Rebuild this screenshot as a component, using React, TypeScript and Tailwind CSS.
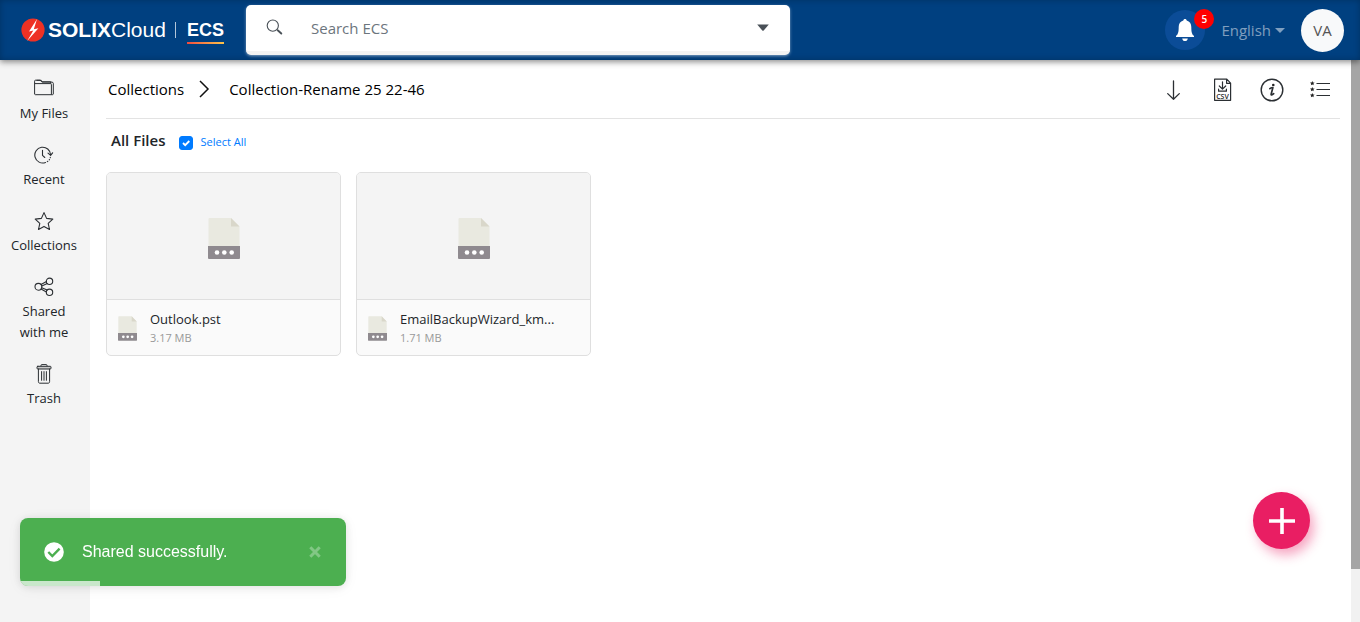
import type { ReactNode } from "react";

type NavItem = { label: string; icon: ReactNode };
type FileItem = { name: string; size: string };

const stroke = {
  fill: "none",
  stroke: "#2b2f33",
  strokeLinecap: "round",
  strokeLinejoin: "round",
} as const;

const FolderIcon = () => (
  <svg viewBox="0 0 20 20" className="size-5" {...stroke} strokeWidth="1" aria-hidden="true">
    <path d="M.6 14.500V2.200c0-.6.3-1 .9-1h4.800l1.600 1.900h10c.8 0 1.400.5 1.400 1.200v10.700c0 .4-.4.7-.8.7H1.400c-.5 0-.8-.3-.8-.700Z" />
    <path d="M3 1.300h4.200l1.500 1.500h8v1.500M1.200 4.600h15.200c.7 0 1 .3 1 1v9.500" />
  </svg>
);

const RecentIcon = () => (
  <svg viewBox="0 0 20 20" className="size-5" {...stroke} strokeWidth="1.100" aria-hidden="true">
    <path d="M16.600 9.800A7.900 7.900 0 1 0 11.500 17.500" />
    <path d="M13.300 16.600l.5-.3M15.200 14.900l.3-.4M16.200 12.800l.1-.4" />
    <path d="M14 8.200l2.600 2.200 2-2.600M8.500 5.200v5.200l2.300 2.100" />
  </svg>
);

const StarIcon = () => (
  <svg viewBox="0 0 20 20" className="size-5" {...stroke} strokeWidth="1.100" aria-hidden="true">
    <path d="M10 1.600l2.600 5.800 6.200.7-4.600 4.200 1.300 6.200L10 15.400l-5.500 3.100 1.300-6.200L1.200 8.100 7.400 7.400Z" />
  </svg>
);

const ShareIcon = () => (
  <svg viewBox="0 0 20 20" className="size-5" {...stroke} strokeWidth="1.100" aria-hidden="true">
    <circle cx="4.400" cy="9.800" r="3.400" />
    <circle cx="15.500" cy="4.300" r="3.200" />
    <circle cx="15.500" cy="15.300" r="3.200" />
    <path d="M7 7.600l5.500-3M7.800 9l5.500-2.500M7.700 10.700l5.500 2.300M7 12.100l5.400 2.900" />
  </svg>
);

const TrashIcon = () => (
  <svg viewBox="0 0 20 20" className="size-5" {...stroke} strokeWidth="1" aria-hidden="true">
    <path d="M7 2.400V1.300c0-.5.3-.7.8-.7h4.400c.5 0 .8.2.8.700v1.100" />
    <rect x="3" y="2.300" width="14" height="2.700" rx=".8" fill="#c8c8c8" />
    <path d="M4.400 5v12.600c0 1 .5 1.600 1.500 1.600h8.200c1 0 1.500-.6 1.500-1.600V5M7.600 7.600v8.700M10 7.600v8.700M12.400 7.600v8.700" />
  </svg>
);

const FileGlyph = ({ className }: { className: string }) => (
  <svg viewBox="0 0 32 41" className={className} aria-hidden="true">
    <path d="M.5 1a1 1 0 0 1 1-1H23l8.500 8.500V29H.5Z" fill="#e9e9e0" />
    <path d="M23 0l8.500 8.500H23Z" fill="#d9d7ca" />
    <path d="M0 28h32v12a1 1 0 0 1-1 1H1a1 1 0 0 1-1-1Z" fill="#8f8a8f" />
    <circle cx="9" cy="34.500" r="2.300" fill="#fff" />
    <circle cx="16.300" cy="34.500" r="2.300" fill="#fff" />
    <circle cx="23.700" cy="34.500" r="2.300" fill="#fff" />
  </svg>
);

const DownloadIcon = () => (
  <svg viewBox="0 0 25 25" className="size-[25px]" {...stroke} strokeWidth="1.300" aria-hidden="true">
    <path d="M12.500 4v18.300M6.700 16.600l5.800 5.700 5.800-5.700" />
  </svg>
);

const CsvIcon = () => (
  <svg viewBox="0 0 25 25" className="size-[25px]" {...stroke} strokeWidth="1.200" aria-hidden="true">
    <path d="M4.600 2.200h12.200l3.800 3.900v17.200h-16ZM16.600 2.400v3.900h3.900" />
    <path d="M12.500 4.800v7.200M9.300 9l3.200 3.200L15.700 9M8.600 12.200v2h7.800v-2" />
    <text x="12.500" y="22" textAnchor="middle" fontSize="7" fontWeight="600" fontFamily="Open Sans, sans-serif" fill="#222" stroke="none">
      CSV
    </text>
  </svg>
);

const InfoIcon = () => (
  <svg viewBox="0 0 25 25" className="size-[25px]" {...stroke} strokeWidth="1.400" aria-hidden="true">
    <circle cx="13" cy="13" r="10.800" />
    <circle cx="14.300" cy="8" r="1.300" fill="#222" stroke="none" />
    <path d="M10.900 11.700c1-.8 2-1.200 3-1.200l-1.700 6.500c-.3 1.500.9 1.100 2.500-.3" strokeWidth="1.700" />
  </svg>
);

const star = "l.7 1.400 1.600.2-1.200 1.100.3 1.600-1.400-.8-1.400.8.300-1.600-1.200-1.100 1.600-.2Z";
const ListIcon = () => (
  <svg viewBox="0 0 25 25" className="size-[25px]" {...stroke} strokeWidth="1.200" strokeLinecap="butt" aria-hidden="true">
    <path d="M8.500 6.500h13.500M8.500 12.500h13.500M8.500 18.500h13.500" />
    <g fill="#222" stroke="none">
      <path d={"M4.300 4" + star} />
      <path d={"M4.300 10" + star} />
      <path d={"M4.300 16" + star} />
    </g>
  </svg>
);

const navItems: NavItem[] = [
  { label: "My Files", icon: <FolderIcon /> },
  { label: "Recent", icon: <RecentIcon /> },
  { label: "Collections", icon: <StarIcon /> },
  { label: "Shared with me", icon: <ShareIcon /> },
  { label: "Trash", icon: <TrashIcon /> },
];

const tools: NavItem[] = [
  { label: "Download", icon: <DownloadIcon /> },
  { label: "Export CSV", icon: <CsvIcon /> },
  { label: "Details", icon: <InfoIcon /> },
  { label: "List view", icon: <ListIcon /> },
];

const files: FileItem[] = [
  { name: "Outlook.pst", size: "3.17 MB" },
  { name: "EmailBackupWizard_km...", size: "1.71 MB" },
];

function Brand() {
  return (
    <a href="#home" className="flex w-[225px] shrink-0 items-center pl-[21px] font-['Liberation_Sans',Arial,sans-serif] text-white">
      <svg viewBox="0 0 24 24" className="mr-[3px] size-6 shrink-0" aria-hidden="true">
        <circle cx="12" cy="12" r="11.600" fill="#ee3124" />
        <path d="M16 1L8 13.400l4.300-1L6.200 23 17.400 10.200l-4.600 1Z" fill="#fff" />
      </svg>
      <span className="text-[21px] leading-6">
        <b>SOLIX</b>Cloud
      </span>
      <span className="ml-[9px] h-4 w-px bg-white/70" />
      <span className="ml-[11px] flex flex-col pt-1 text-[18px] leading-5 font-bold">
        ECS
        <span className="mt-0.5 h-0.5 bg-linear-to-r from-[#f0483e] to-[#fbc34a]" />
      </span>
    </a>
  );
}

function Header() {
  return (
    <header className="relative z-10 flex h-[60px] shrink-0 items-center bg-[#004080] shadow-[0_2px_6px_rgba(0,0,0,0.45),inset_0_0_6px_rgba(0,0,0,0.25)]">
      <Brand />
      <form role="search" className="ml-[21px] flex h-[50px] w-2/5 items-center rounded-[5px] border-b-4 border-[#f3f3f3] bg-white shadow-[0_1px_3px_rgba(255,255,255,0.5)]">
        <svg viewBox="0 0 18 18" className="ml-5 size-[18px] shrink-0" fill="none" stroke="#495057" aria-hidden="true">
          <circle cx="6.800" cy="6.600" r="5.600" strokeWidth="1.100" />
          <path d="M10.900 10.600l1.500 1.300" strokeWidth="1.100" />
          <path d="M12 11.500l3.300 3" strokeWidth="1.900" strokeLinecap="round" />
        </svg>
        <input
          type="search"
          aria-label="Search ECS"
          placeholder="Search ECS"
          className="ml-[27px] min-w-0 flex-1 bg-transparent text-[15px] outline-none placeholder:text-[#6c757d]"
        />
        <button type="button" aria-label="Search options" className="mr-5 flex">
          <svg viewBox="0 0 14 8" className="h-2 w-[14px]" aria-hidden="true">
            <path d="M1.200.5h11.600L7.700 6.500q-.7.700-1.400 0Z" fill="#495057" />
          </svg>
        </button>
      </form>
      <div className="ml-auto flex items-center pr-4">
        <button type="button" aria-label="Notifications, 5 new" className="relative flex size-10 items-center justify-center rounded-full bg-[#0b4c97]">
          <svg viewBox="0 0 20 24" className="h-6 w-5" fill="#fff" aria-hidden="true">
            <path d="M10 1c1 0 1.600.6 1.700 1.600 3 .8 4.600 3.200 4.600 6.400 0 5.200.7 7.500 2.700 8.900V19H1v-1.100c2-1.400 2.700-3.700 2.700-8.900 0-3.200 1.600-5.600 4.600-6.400C8.400 1.600 9 1 10 1Z" />
            <path d="M7.200 20.500h5.600c-.2 1.600-1.300 2.600-2.800 2.600s-2.600-1-2.800-2.600Z" />
          </svg>
          <span className="absolute -top-px -right-[9px] flex size-5 items-center justify-center rounded-full bg-[#ff0000] text-[10px] font-semibold text-white">5</span>
        </button>
        <button type="button" className="ml-4 flex items-center gap-1 text-[15px] text-white/50">
          English
          <svg viewBox="0 0 10 5" className="h-[5px] w-[10px]" fill="currentColor" aria-hidden="true">
            <path d="M0 0h10L5 5Z" />
          </svg>
        </button>
        <button type="button" className="ml-4 flex size-[43px] items-center justify-center rounded-full bg-[#f8f9fa] text-[15px] text-[#555]">VA</button>
      </div>
    </header>
  );
}

function Sidebar() {
  return (
    <nav className="w-[90px] shrink-0 bg-[#f4f4f4] pt-[19px]">
      <ul className="flex flex-col gap-[21px]">
        {navItems.map((item) => (
          <li key={item.label}>
            <a href="#nav" className="flex w-[88px] flex-col items-center gap-1 px-2 text-center text-[13px] leading-[21px] text-[#212529]">
              {item.icon}
              {item.label}
            </a>
          </li>
        ))}
      </ul>
    </nav>
  );
}

function FileCard({ file }: { file: FileItem }) {
  return (
    <article className="w-[235px] overflow-hidden rounded-[5px] border border-[#dfdfdf] bg-[#fafafa]">
      <div className="flex h-[127px] items-center justify-center border-b border-[#dfdfdf] bg-[#f4f4f4] pt-1">
        <FileGlyph className="h-[41px] w-8" />
      </div>
      <div className="flex h-[55px] items-center pl-[11px]">
        <FileGlyph className="mt-px h-[25px] w-[19px]" />
        <div className="ml-[13px]">
          <h2 className="text-[13px] leading-5 text-[#212529]">{file.name}</h2>
          <p className="text-[11px] leading-[18px] text-[#999]">{file.size}</p>
        </div>
      </div>
    </article>
  );
}

function Toast() {
  return (
    <div role="status" className="fixed bottom-9 left-5 z-20 flex h-[68px] w-[326px] items-center overflow-hidden rounded-lg bg-[#4caf50] pr-6 pl-6 font-['Liberation_Sans',Arial,sans-serif] text-white shadow-[0_1px_10px_rgba(0,0,0,0.1),0_2px_15px_rgba(0,0,0,0.05)]">
      <svg viewBox="0 0 20 20" className="size-5 shrink-0" aria-hidden="true">
        <circle cx="10" cy="10" r="9.800" fill="#fff" />
        <path d="M4.300 10l4 4 7.300-7.400" fill="none" stroke="#4caf50" strokeWidth="2.400" />
      </svg>
      <p className="ml-[18px] flex-1 text-base">Shared successfully.</p>
      <button type="button" aria-label="Close" className="flex opacity-30">
        <svg viewBox="0 0 14 14" className="size-[14px]" fill="none" stroke="#fff" strokeWidth="3" aria-hidden="true">
          <path d="M2.300 2.300l9.400 9.400M11.700 2.300l-9.400 9.400" />
        </svg>
      </button>
      <span className="absolute bottom-0 left-0 h-[5px] w-20 bg-white/70" />
    </div>
  );
}

export default function App() {
  return (
    <div className="flex h-screen flex-col overflow-hidden bg-white font-['Open_Sans','Noto_Sans',sans-serif] text-[#212529]">
      <Header />
      <div className="flex min-h-0 flex-1">
        <Sidebar />
        <main className="min-w-0 flex-1 pr-[11px] pl-4">
          <div className="flex h-[59px] items-center border-b border-[#e3e3e3] pr-[7px] pl-0.5">
            <nav aria-label="Breadcrumb" className="flex items-center text-[15px] text-black">
              <a href="#collections">Collections</a>
              <svg viewBox="0 0 12 18" className="mx-[14px] h-[18px] w-3" fill="none" stroke="#111" strokeWidth="1.500" aria-hidden="true">
                <path d="M2 1l8 8-8 8" />
              </svg>
              <span className="ml-[5px]">Collection-Rename 25 22-46</span>
            </nav>
            <div className="ml-auto flex gap-6">
              {tools.map((tool) => (
                <button key={tool.label} type="button" aria-label={tool.label}>
                  {tool.icon}
                </button>
              ))}
            </div>
          </div>
          <div className="flex h-[53px] items-center pb-[10px] pl-[5px]">
            <h1 className="text-[15px] font-semibold">All Files</h1>
            <label className="ml-[14px] flex items-center pt-1 text-[11px] text-[#007bff]">
              <span className="relative mr-[7px] flex size-[14px]">
                <input type="checkbox" defaultChecked className="peer size-[14px] appearance-none rounded-[3px] border border-[#007bff] checked:bg-[#007bff]" />
                <svg viewBox="0 0 14 14" className="pointer-events-none absolute inset-0 hidden peer-checked:block" fill="none" stroke="#fff" strokeWidth="1.800" aria-hidden="true">
                  <path d="M4 7l2.200 2.200L10.300 5" />
                </svg>
              </span>
              Select All
            </label>
          </div>
          <section aria-label="Files" className="flex flex-wrap gap-[15px]">
            {files.map((file) => (
              <FileCard key={file.name} file={file} />
            ))}
          </section>
        </main>
        <div aria-hidden="true" className="w-[9px] shrink-0 bg-[#f1f1f1]">
          <div className="h-[90.5%] bg-[#a5a5a5]" />
        </div>
      </div>
      <button type="button" aria-label="Add" className="fixed right-[50px] bottom-[73px] z-20 flex size-[57px] items-center justify-center rounded-full bg-[#e91e63] shadow-[4px_6px_12px_rgba(233,30,99,0.4)]">
        <svg viewBox="0 0 26 26" className="size-[26px]" stroke="#fff" strokeWidth="3.600" aria-hidden="true">
          <path d="M13 0v26M0 13h26" />
        </svg>
      </button>
      <Toast />
    </div>
  );
}
